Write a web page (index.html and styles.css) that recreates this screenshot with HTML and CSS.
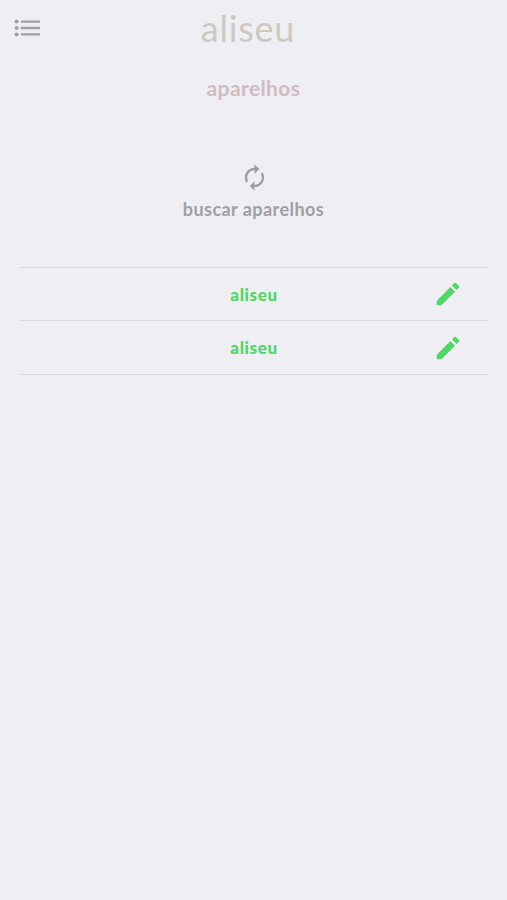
FILE: index.html
```html
<!DOCTYPE html>
<html lang="pt">
<head>
<meta charset="utf-8">
<title>aliseu</title>
<link rel="stylesheet" href="styles.css">
</head>
<body>
<header class="header">
  <svg class="menu" viewBox="0 0 26 18"><circle cx="2.6" cy="2.6" r="2"/><circle cx="2.6" cy="9" r="2"/><circle cx="2.6" cy="15.4" r="2"/><path d="M6.8 1.4H26v2.4H6.8zM6.8 7.8H26v2.4H6.8zM6.8 14.2H26v2.4H6.8z"/></svg>
  <div class="brand"><span class="word">aliseu</span></div>
</header>
<main>
  <h1 class="title">aparelhos</h1>
  <section class="search">
    <svg class="refresh" viewBox="0 0 24 24"><path d="M12 6v3l4-4-4-4v3c-4.42 0-8 3.58-8 8 0 1.57.46 3.03 1.24 4.26L6.7 14.8c-.45-.83-.7-1.79-.7-2.8 0-3.31 2.69-6 6-6zm6.76 1.74L17.3 9.2c.44.84.7 1.79.7 2.8 0 3.31-2.69 6-6 6v-3l-4 4 4 4v-3c4.42 0 8-3.58 8-8 0-1.57-.46-3.03-1.24-4.26z"/></svg>
    <div class="search-label">buscar aparelhos</div>
  </section>
  <ul class="devices">
    <li class="device"><span class="name">aliseu</span><svg class="edit" viewBox="0 0 24 24"><path d="M3 17.8V20.2q0 .8.8.8H6.2q.4 0 .7-.3L17.6 10.1l-3.7-3.7L3.3 17.1q-.3.3-.3.7zM20.71 7.04a1 1 0 0 0 0-1.41l-2.34-2.34a1 1 0 0 0-1.41 0l-1.83 1.83 3.75 3.75 1.83-1.83z"/></svg></li>
    <li class="device"><span class="name">aliseu</span><svg class="edit" viewBox="0 0 24 24"><path d="M3 17.8V20.2q0 .8.8.8H6.2q.4 0 .7-.3L17.6 10.1l-3.7-3.7L3.3 17.1q-.3.3-.3.7zM20.71 7.04a1 1 0 0 0 0-1.41l-2.34-2.34a1 1 0 0 0-1.41 0l-1.83 1.83 3.75 3.75 1.83-1.83z"/></svg></li>
  </ul>
</main>
</body>
</html>
```
FILE: styles.css
```css
* { box-sizing: border-box; }
body {
  margin: 0;
  min-height: 900px;
  background: #efeef3;
  font-family: Lato, sans-serif;
  color: #a0a0a2;
}
svg { display: block; fill: currentColor; }
.header {
  display: grid;
  grid-template-columns: 60px 1fr 60px;
  height: 60px;
}
.menu { width: 26px; height: 18px; margin: 19px 0 0 14px; }
.brand {
  margin-top: 8px;
  text-align: center;
  font-size: 36px;
  line-height: 40px;
  letter-spacing: 0.8px;
  color: #cbcac1;
}
.brand .word { margin-right: 11px; }
.title {
  margin: 14px 0 0;
  text-align: center;
  font-size: 21px;
  line-height: 28px;
  font-weight: 700;
  letter-spacing: 0.4px;
  color: #cfbcc3;
}
.search {
  display: flex;
  flex-direction: column;
  align-items: center;
  height: 165px;
  padding-top: 61px;
}
.refresh { width: 29px; height: 29px; margin-left: 1px; }
.search-label {
  margin-top: 5px;
  font-size: 18px;
  line-height: 24px;
  font-weight: 700;
  letter-spacing: 0.45px;
}
.devices {
  list-style: none;
  margin: 0 19px 0 20px;
  padding: 0;
  border-top: 1px solid #d9d8dd;
}
.device {
  display: grid;
  grid-template-columns: 80px 1fr 80px;
  align-items: center;
  height: 53px;
  border-bottom: 1px solid #d9d8dd;
  color: #4cd964;
}
.device + .device { height: 54px; }
.name {
  grid-column: 2;
  padding-top: 1px;
  text-align: center;
  font-size: 17px;
  line-height: 24px;
  font-weight: 900;
  letter-spacing: 0.6px;
}
.edit { width: 30px; height: 30px; margin-left: 25px; }
```
